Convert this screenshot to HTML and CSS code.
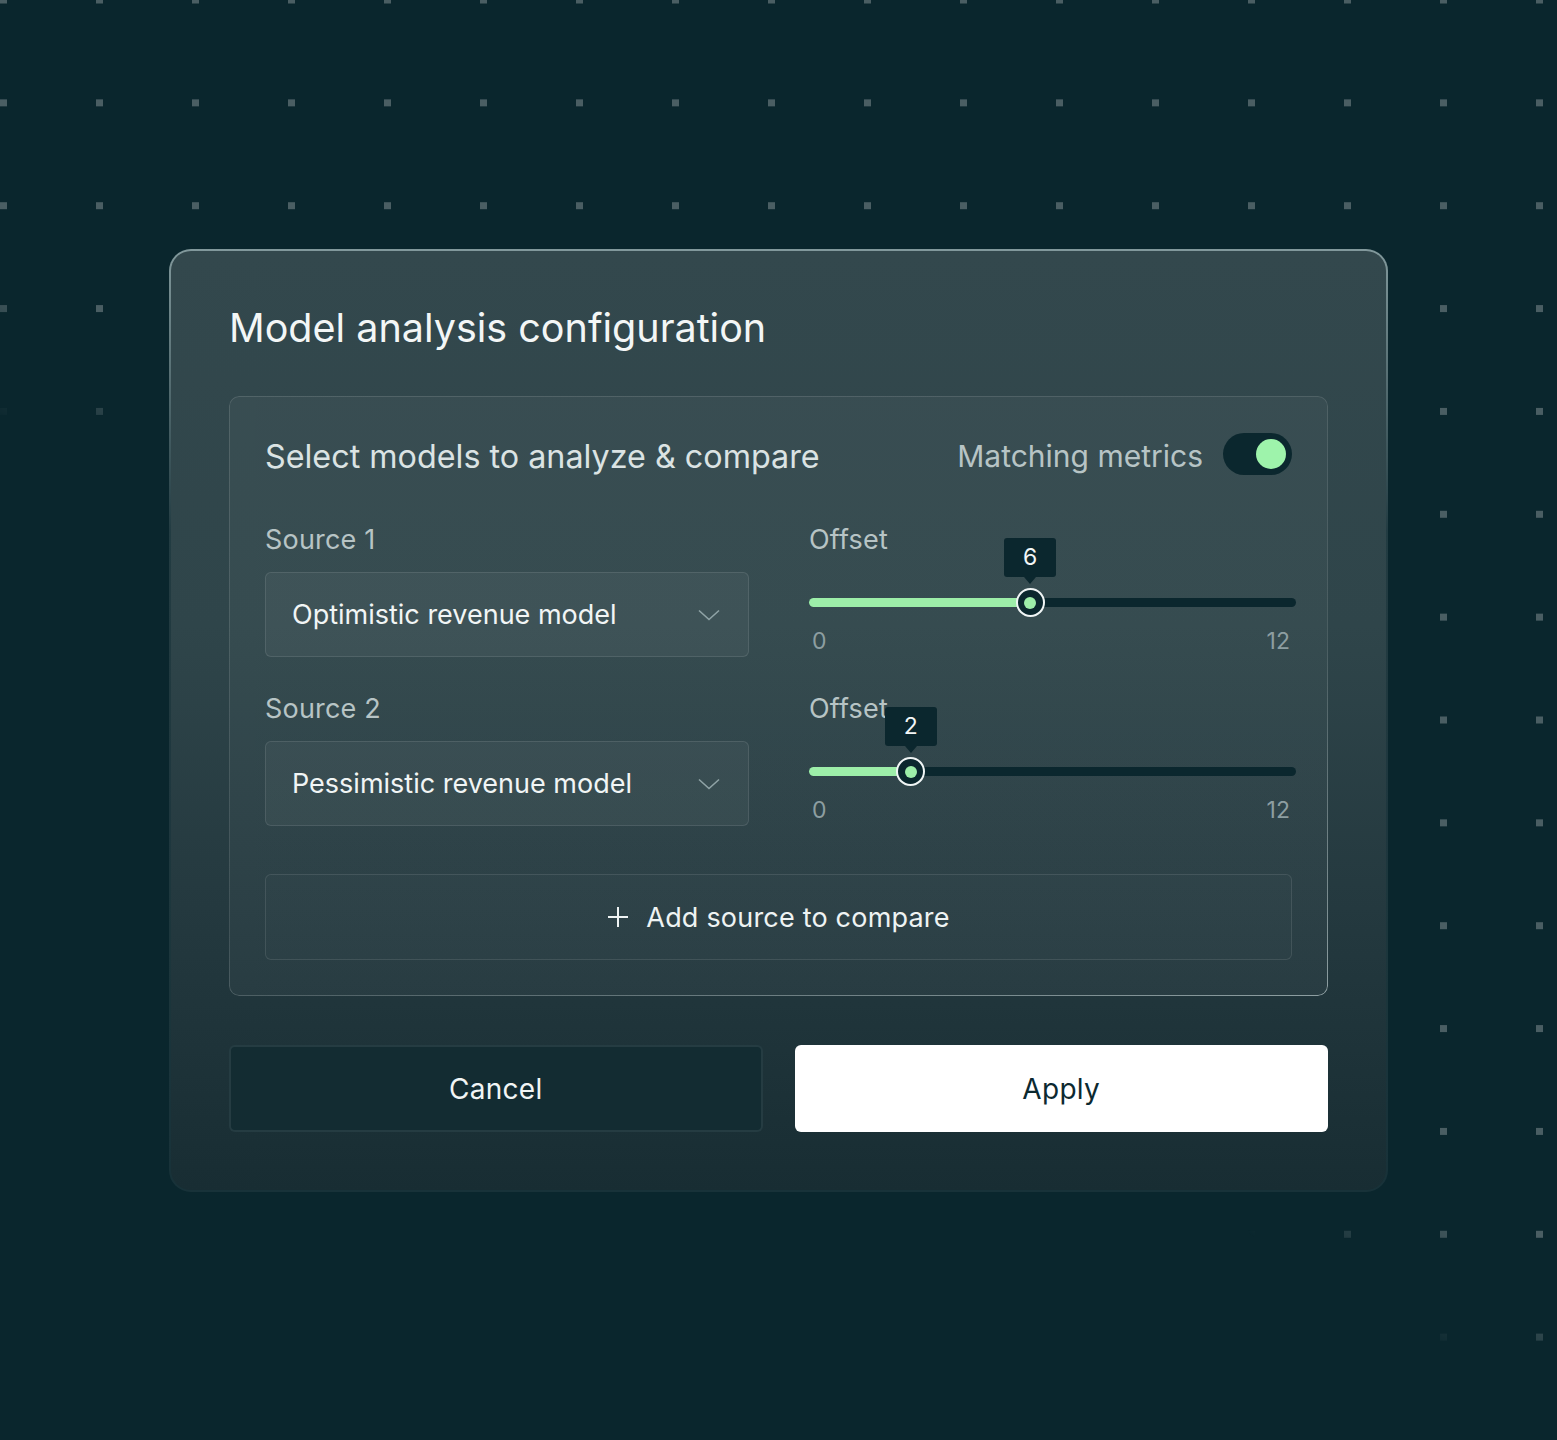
FILE: index.html
```html
<!DOCTYPE html>
<html lang="en">
<head>
<meta charset="utf-8">
<title>Model analysis configuration</title>
<link rel="stylesheet" href="styles.css">
</head>
<body>
<svg class="dots" width="1557" height="1440" aria-hidden="true">
  <defs>
    <pattern id="dotgrid" x="0" y="-3.5" width="96" height="102.857" patternUnits="userSpaceOnUse">
      <rect x="0" y="0" width="7" height="7" fill="#4a5e63"/>
    </pattern>
  </defs>
  <rect width="1557" height="1440" fill="url(#dotgrid)"/>
</svg>

<main class="dialog">
  <h1 class="title">Model analysis configuration</h1>

  <section class="panel">
    <div class="panel-head">
      <h2 class="panel-title">Select models to analyze &amp; compare</h2>
      <div class="match">
        <span class="match-label">Matching metrics</span>
        <span class="switch"><span class="switch-knob"></span></span>
      </div>
    </div>

    <div class="rows">
      <div class="row">
        <div class="field">
          <div class="label">Source 1</div>
          <div class="select">
            <span class="select-text">Optimistic revenue model</span>
            <svg class="chev" width="22" height="12" viewBox="0 0 22 12"><path d="M1 1.5 L11 10.5 L21 1.5" fill="none" stroke="#8fa3a6" stroke-width="1.6"/></svg>
          </div>
        </div>
        <div class="field">
          <div class="label">Offset</div>
          <div class="slider">
            <div class="track">
              <div class="fill" style="width:45.4%"></div>
              <div class="thumb" style="left:45.4%">
                <div class="tip">6</div>
              </div>
            </div>
            <div class="scale"><span>0</span><span>12</span></div>
          </div>
        </div>
      </div>

      <div class="row">
        <div class="field">
          <div class="label">Source 2</div>
          <div class="select">
            <span class="select-text">Pessimistic revenue model</span>
            <svg class="chev" width="22" height="12" viewBox="0 0 22 12"><path d="M1 1.5 L11 10.5 L21 1.5" fill="none" stroke="#8fa3a6" stroke-width="1.6"/></svg>
          </div>
        </div>
        <div class="field">
          <div class="label">Offset</div>
          <div class="slider">
            <div class="track">
              <div class="fill" style="width:20.9%"></div>
              <div class="thumb" style="left:20.9%">
                <div class="tip">2</div>
              </div>
            </div>
            <div class="scale"><span>0</span><span>12</span></div>
          </div>
        </div>
      </div>
    </div>

    <button class="add" type="button">
      <svg class="plus" width="22" height="22" viewBox="0 0 22 22"><path d="M11 1 V21 M1 11 H21" stroke="#eef3f3" stroke-width="2" fill="none"/></svg>
      <span>Add source to compare</span>
    </button>
  </section>

  <div class="actions">
    <button class="btn cancel" type="button">Cancel</button>
    <button class="btn apply" type="button">Apply</button>
  </div>
</main>
</body>
</html>
```

FILE: styles.css
```css
* { box-sizing: border-box; }

html, body {
  margin: 0;
  padding: 0;
}

body {
  width: 1557px;
  height: 1440px;
  background: #0a262d;
  font-family: Inter, "Noto Sans", "Liberation Sans", sans-serif;
  color: #eef3f3;
  display: flex;
  align-items: center;
  justify-content: center;
  position: relative;
  overflow: hidden;
}

.dots {
  position: absolute;
  left: 0;
  top: 0;
  -webkit-mask-image: linear-gradient(33deg, transparent 41.5%, #000 48%);
  mask-image: linear-gradient(33deg, transparent 41.5%, #000 48%);
}

.dialog {
  position: relative;
  width: 1219px;
  margin-top: 1px;
  padding: 53px 58px 58px;
  border: 2px solid transparent;
  border-radius: 22px;
  background:
    linear-gradient(180deg, #33484d 0%, #2f454a 40%, #24393f 70%, #182d33 100%) padding-box,
    linear-gradient(180deg, rgba(160,182,184,0.8) 0%, rgba(255,255,255,0.10) 30%, rgba(255,255,255,0.06) 100%) border-box;
}

.title {
  margin: 0;
  font-size: 39.5px;
  line-height: 48px;
  font-weight: 400;
  color: #f3f6f6;
}

.panel {
  position: relative;
  margin-top: 44px;
  padding: 37px 36px 36px;
  border-radius: 10px;
  background: linear-gradient(180deg, rgba(255,255,255,0.035), rgba(255,255,255,0.035));
}

.panel::before {
  content: "";
  position: absolute;
  inset: 0;
  border-radius: inherit;
  padding: 1px;
  background: linear-gradient(165deg, rgba(255,255,255,0.13) 0%, rgba(255,255,255,0.10) 60%, rgba(210,225,226,0.6) 100%);
  -webkit-mask: linear-gradient(#000 0 0) content-box, linear-gradient(#000 0 0);
  -webkit-mask-composite: xor;
  mask: linear-gradient(#000 0 0) content-box exclude, linear-gradient(#000 0 0);
  pointer-events: none;
}

.panel-head {
  height: 42px;
  display: flex;
  align-items: center;
  justify-content: space-between;
}

.panel-title {
  margin: 0;
  padding-top: 4px;
  font-size: 32.3px;
  font-weight: 400;
  color: #dbe3e3;
}

.match {
  display: flex;
  align-items: center;
  gap: 20px;
}

.match-label {
  padding-top: 3px;
  font-size: 30px;
  color: #b7c4c5;
}

.switch {
  width: 69px;
  height: 42px;
  border-radius: 21px;
  background: #0b272e;
  display: flex;
  align-items: center;
  justify-content: flex-end;
  padding-right: 6px;
}

.switch-knob {
  width: 30px;
  height: 30px;
  border-radius: 50%;
  background: #9ef3ab;
}

.rows {
  margin-top: 49px;
  display: flex;
  flex-direction: column;
  gap: 36px;
}

.row {
  display: grid;
  grid-template-columns: 484px 1fr;
  column-gap: 60px;
}

.label {
  height: 32px;
  line-height: 32px;
  font-size: 27px;
  color: #b7c4c5;
  letter-spacing: 0.2px;
}

.select {
  margin-top: 16px;
  height: 85px;
  border-radius: 6px;
  border: 1px solid rgba(255,255,255,0.10);
  background: rgba(255,255,255,0.045);
  display: flex;
  align-items: center;
  justify-content: space-between;
  padding: 0 28px 0 26px;
}

.select-text {
  font-size: 27px;
  color: #f1f5f5;
}

.chev { display: block; }

.slider {
  width: calc(100% + 4px);
}

.track {
  position: relative;
  margin-top: 42px;
  height: 9px;
  border-radius: 5px;
  background: #0b272e;
}

.fill {
  height: 100%;
  border-radius: 5px;
  background: #9deea9;
}

.thumb {
  position: absolute;
  top: 50%;
  width: 29px;
  height: 29px;
  margin: -14.5px 0 0 -14.5px;
  border-radius: 50%;
  border: 2px solid #f0f5f5;
  background: #0b272e;
  display: flex;
  align-items: center;
  justify-content: center;
}

.thumb::after {
  content: "";
  width: 12px;
  height: 12px;
  border-radius: 50%;
  background: #9deea9;
}

.tip {
  position: absolute;
  left: 50%;
  bottom: 38px;
  transform: translateX(-50%);
  width: 52px;
  height: 39px;
  border-radius: 3px;
  background: #0b272e;
  color: #f3f6f6;
  font-size: 23px;
  line-height: 39px;
  text-align: center;
}

.tip::after {
  content: "";
  position: absolute;
  left: 50%;
  top: 100%;
  margin-left: -6px;
  border-left: 6px solid transparent;
  border-right: 6px solid transparent;
  border-top: 7px solid #0b272e;
}

.scale {
  margin-top: 20px;
  display: flex;
  justify-content: space-between;
  padding: 0 6px 0 3px;
  font-size: 23px;
  line-height: 28px;
  color: #8d9ea1;
}

.add {
  margin-top: 48px;
  width: 100%;
  height: 86px;
  border-radius: 6px;
  border: 1px solid rgba(255,255,255,0.10);
  background: rgba(255,255,255,0.01);
  color: #eef3f3;
  font-family: inherit;
  font-size: 27px;
  letter-spacing: 0.2px;
  display: flex;
  align-items: center;
  justify-content: center;
  gap: 17px;
  padding: 0;
}

.plus { display: block; }

.actions {
  margin-top: 49px;
  display: grid;
  grid-template-columns: 1fr 1fr;
  column-gap: 32px;
}

.btn {
  height: 87px;
  border-radius: 6px;
  font-family: inherit;
  font-size: 28px;
  letter-spacing: 0.3px;
  padding: 0;
}

.cancel {
  background: #132c32;
  border: 2px solid rgba(255,255,255,0.08);
  color: #f1f5f5;
}

.apply {
  background: #ffffff;
  border: none;
  color: #0c2930;
}
```
